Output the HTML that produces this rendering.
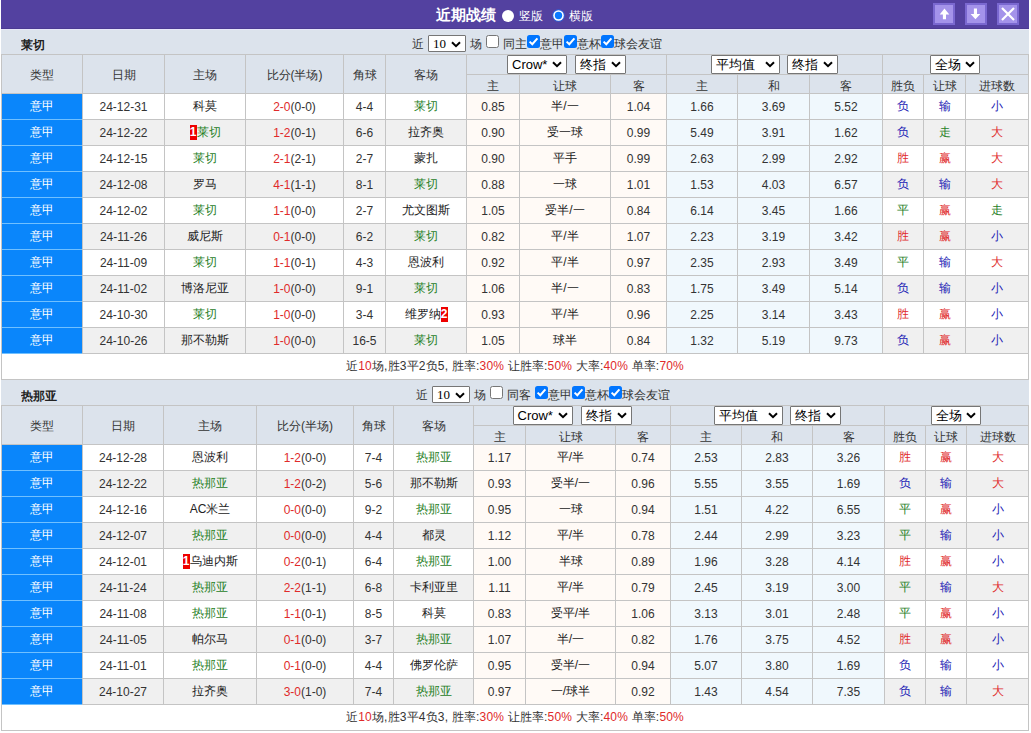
<!DOCTYPE html><html><head><meta charset="utf-8"><style>
*{margin:0;padding:0;box-sizing:border-box}
html,body{width:1031px;height:733px;overflow:hidden;background:#fff}
body{position:relative;font-family:"Liberation Sans",sans-serif;font-size:12px;color:#222}
body>div{position:absolute;white-space:nowrap;overflow:hidden}
svg{display:inline-block}
.r{color:#e02a2a}
.bd{background:#e00;color:#fff;font-weight:bold;display:inline-block;width:7px;line-height:15px;text-align:center;vertical-align:0}
.cap{font-weight:bold;font-size:12px;line-height:33px;color:#222}
.hc{text-align:center;line-height:40px;color:#333}
.hs{text-align:center;line-height:22px;color:#333}
.dc{text-align:center;line-height:25px;color:#222}
.dn{line-height:27px;color:#333}
.ft{text-align:center;line-height:25px;color:#333;letter-spacing:0.17px}
.grp{display:flex;justify-content:center;align-items:center;gap:8px}
.ttl{left:436px;top:0;height:29px;line-height:29px;color:#fff;font-size:12px;overflow:visible!important;display:flex;align-items:center}
.ttl b{font-size:15px;margin-right:6px}
.rd{margin-right:5px;position:relative;top:1px}
.rt{margin-right:9px;position:relative;top:2px}
.btn{background:#a493ea;border:2px solid #7a68d0}
.btn svg{position:absolute;left:-2px;top:-2px}
.flt{left:412px;height:25px;overflow:visible!important;font-size:12px;color:#333;display:flex;align-items:center}
.sel{display:inline-flex;align-items:center;position:relative;height:19px;border:1px solid #767676;border-radius:1px;background:#fff;padding-left:4px;color:#000;font-size:13px}
.sel .chev{position:absolute;right:4px;top:5px}
.cbw{display:inline-block;width:13px;height:13px;position:relative;top:-1px}
.flt .t{position:relative;top:2px}
</style></head><body>
<div style="left:1px;top:0px;width:1028px;height:29px;background:#5341a0"></div>
<div style="left:1px;top:28px;width:1028px;height:1px;background:#4b3a92"></div>
<div class="ttl"><b>近期战绩</b><svg width="12" height="12" viewBox="0 0 12 12" class="rd"><circle cx="6" cy="6" r="6" fill="#fff"/></svg><span class="rt">竖版</span><svg width="13" height="13" viewBox="0 0 13 13" class="rd" style="margin-left:-0.5px;margin-right:4.5px;top:0.5px"><circle cx="6.5" cy="6.5" r="6.3" fill="#2f5fd8"/><circle cx="6.5" cy="6.5" r="5.3" fill="#fff"/><circle cx="6.5" cy="6.5" r="3.7" fill="#0a7bff"/></svg><span class="rt">横版</span></div>
<div class="btn" style="left:933px;top:3px;width:22px;height:22px;"><svg width="22" height="22" viewBox="0 0 22 22"><path d="M11.45 5.6 L16.3 11.4 L13 11.4 L13 16.2 L9.9 16.2 L9.9 11.4 L6.7 11.4 Z" fill="#fff"/></svg></div>
<div class="btn" style="left:965px;top:3px;width:22px;height:22px;"><svg width="22" height="22" viewBox="0 0 22 22"><path d="M10.45 16.3 L15.3 11 L12 11 L12 5.6 L8.9 5.6 L8.9 11 L5.6 11 Z" fill="#fff"/></svg></div>
<div class="btn" style="left:997px;top:3px;width:22px;height:22px;"><svg width="22" height="22" viewBox="0 0 22 22"><path d="M5 5 L17 17 M17 5 L5 17" stroke="#fff" stroke-width="2.2" fill="none"/></svg></div>
<div style="left:1px;top:29px;width:1028px;height:25px;background:#dce3ec"></div>
<div class="cap" style="left:21px;top:29px;width:100px;height:25px;">莱切</div>
<div class="flt" style="top:30px;left:412px"><span class="t">近</span><span class="sel" style="width:38px;margin:2px 4px 0 4px;height:17px"><span class="sv" style="font-family:'Liberation Serif',serif;font-size:13px;">10</span><svg class="chev" width="10" height="7" viewBox="0 0 10 7"><polyline points="1,1.2 5,5.2 9,1.2" fill="none" stroke="#000" stroke-width="2"/></svg></span><span class="t">场</span><span class="cbw" style="margin:0 4px 0 4px"><svg width="13" height="13" viewBox="0 0 13 13" style="display:block"><rect x="0.5" y="0.5" width="12" height="12" rx="2" fill="#fff" stroke="#767676" stroke-width="1"/></svg></span><span class="t" style="margin-right:0px">同主</span><span class="cbw"><svg width="13" height="13" viewBox="0 0 13 13" style="display:block"><rect x="0" y="0" width="13" height="13" rx="2.5" fill="#0075ff"/><polyline points="2.6,6.6 5.3,9.2 10.4,3.4" fill="none" stroke="#fff" stroke-width="2"/></svg></span><span class="t">意甲</span><span class="cbw"><svg width="13" height="13" viewBox="0 0 13 13" style="display:block"><rect x="0" y="0" width="13" height="13" rx="2.5" fill="#0075ff"/><polyline points="2.6,6.6 5.3,9.2 10.4,3.4" fill="none" stroke="#fff" stroke-width="2"/></svg></span><span class="t">意杯</span><span class="cbw"><svg width="13" height="13" viewBox="0 0 13 13" style="display:block"><rect x="0" y="0" width="13" height="13" rx="2.5" fill="#0075ff"/><polyline points="2.6,6.6 5.3,9.2 10.4,3.4" fill="none" stroke="#fff" stroke-width="2"/></svg></span><span class="t">球会友谊</span></div>
<div style="left:1px;top:54px;width:1028px;height:39px;background:#dce3ec"></div>
<div style="left:1px;top:54px;width:1028px;height:1px;background:#c4c4c4"></div>
<div style="left:466px;top:74px;width:563px;height:1px;background:#c4c4c4"></div>
<div style="left:1px;top:93px;width:1028px;height:1px;background:#c4c4c4"></div>
<div style="left:1px;top:54px;width:1px;height:40px;background:#c4c4c4"></div>
<div style="left:82px;top:54px;width:1px;height:40px;background:#c4c4c4"></div>
<div style="left:164px;top:54px;width:1px;height:40px;background:#c4c4c4"></div>
<div style="left:245px;top:54px;width:1px;height:40px;background:#c4c4c4"></div>
<div style="left:343px;top:54px;width:1px;height:40px;background:#c4c4c4"></div>
<div style="left:385px;top:54px;width:1px;height:40px;background:#c4c4c4"></div>
<div style="left:466px;top:54px;width:1px;height:40px;background:#c4c4c4"></div>
<div style="left:519px;top:74px;width:1px;height:20px;background:#c4c4c4"></div>
<div style="left:610px;top:74px;width:1px;height:20px;background:#c4c4c4"></div>
<div style="left:666px;top:54px;width:1px;height:40px;background:#c4c4c4"></div>
<div style="left:737px;top:74px;width:1px;height:20px;background:#c4c4c4"></div>
<div style="left:809px;top:74px;width:1px;height:20px;background:#c4c4c4"></div>
<div style="left:882px;top:54px;width:1px;height:40px;background:#c4c4c4"></div>
<div style="left:923px;top:74px;width:1px;height:20px;background:#c4c4c4"></div>
<div style="left:965px;top:74px;width:1px;height:20px;background:#c4c4c4"></div>
<div style="left:1028px;top:54px;width:1px;height:40px;background:#c4c4c4"></div>
<div class="hc" style="left:2px;top:55px;width:80px;height:38px;">类型</div>
<div class="hc" style="left:83px;top:55px;width:81px;height:38px;">日期</div>
<div class="hc" style="left:165px;top:55px;width:80px;height:38px;">主场</div>
<div class="hc" style="left:246px;top:55px;width:97px;height:38px;">比分(半场)</div>
<div class="hc" style="left:344px;top:55px;width:41px;height:38px;">角球</div>
<div class="hc" style="left:386px;top:55px;width:80px;height:38px;">客场</div>
<div class="hs" style="left:467px;top:75px;width:52px;height:18px;">主</div>
<div class="hs" style="left:520px;top:75px;width:90px;height:18px;">让球</div>
<div class="hs" style="left:611px;top:75px;width:55px;height:18px;">客</div>
<div class="hs" style="left:667px;top:75px;width:70px;height:18px;">主</div>
<div class="hs" style="left:738px;top:75px;width:71px;height:18px;">和</div>
<div class="hs" style="left:810px;top:75px;width:72px;height:18px;">客</div>
<div class="hs" style="left:883px;top:75px;width:40px;height:18px;">胜负</div>
<div class="hs" style="left:924px;top:75px;width:41px;height:18px;">让球</div>
<div class="hs" style="left:966px;top:75px;width:62px;height:18px;">进球数</div>
<div class="grp" style="left:467px;top:55px;width:199px;height:19px;"><span class="sel" style="width:60px;"><span class="sv" style="font-family:'Liberation Sans',sans-serif;">Crow*</span><svg class="chev" width="10" height="7" viewBox="0 0 10 7"><polyline points="1,1.2 5,5.2 9,1.2" fill="none" stroke="#000" stroke-width="2"/></svg></span><span class="sel" style="width:51px;"><span class="sv" style="">终指</span><svg class="chev" width="10" height="7" viewBox="0 0 10 7"><polyline points="1,1.2 5,5.2 9,1.2" fill="none" stroke="#000" stroke-width="2"/></svg></span></div>
<div class="grp" style="left:667px;top:55px;width:215px;height:19px;gap:7px"><span class="sel" style="width:69px;"><span class="sv" style="">平均值</span><svg class="chev" width="10" height="7" viewBox="0 0 10 7"><polyline points="1,1.2 5,5.2 9,1.2" fill="none" stroke="#000" stroke-width="2"/></svg></span><span class="sel" style="width:51px;"><span class="sv" style="">终指</span><svg class="chev" width="10" height="7" viewBox="0 0 10 7"><polyline points="1,1.2 5,5.2 9,1.2" fill="none" stroke="#000" stroke-width="2"/></svg></span></div>
<div class="grp" style="left:883px;top:55px;width:145px;height:19px;"><span class="sel" style="width:50px;margin-right:1px"><span class="sv" style="">全场</span><svg class="chev" width="10" height="7" viewBox="0 0 10 7"><polyline points="1,1.2 5,5.2 9,1.2" fill="none" stroke="#000" stroke-width="2"/></svg></span></div>
<div class="dc" style="left:2px;top:94px;width:80px;height:25px;background:#0a86fb"><span style="color:#fff">意甲</span></div>
<div class="dc dn" style="left:83px;top:94px;width:81px;height:25px;background:#fff">24-12-31</div>
<div class="dc" style="left:165px;top:94px;width:80px;height:25px;background:#fff"><span style="color:#222">科莫</span></div>
<div class="dc dn" style="left:246px;top:94px;width:97px;height:25px;background:#fff"><span style="color:#e02a2a">2-0</span>(0-0)</div>
<div class="dc dn" style="left:344px;top:94px;width:41px;height:25px;background:#fff">4-4</div>
<div class="dc" style="left:386px;top:94px;width:80px;height:25px;background:#fff"><span style="color:#1f801f">莱切</span></div>
<div class="dc dn" style="left:467px;top:94px;width:52px;height:25px;background:#fffaf6">0.85</div>
<div class="dc" style="left:520px;top:94px;width:90px;height:25px;background:#fffaf6">半/一</div>
<div class="dc dn" style="left:611px;top:94px;width:55px;height:25px;background:#fffaf6">1.04</div>
<div class="dc dn" style="left:667px;top:94px;width:70px;height:25px;background:#f0f8fd">1.66</div>
<div class="dc dn" style="left:738px;top:94px;width:71px;height:25px;background:#f0f8fd">3.69</div>
<div class="dc dn" style="left:810px;top:94px;width:72px;height:25px;background:#f0f8fd">5.52</div>
<div class="dc" style="left:883px;top:94px;width:40px;height:25px;background:#fff"><span style="color:#1a1ab4">负</span></div>
<div class="dc" style="left:924px;top:94px;width:41px;height:25px;background:#fff"><span style="color:#1a1ab4">输</span></div>
<div class="dc" style="left:966px;top:94px;width:62px;height:25px;background:#fff"><span style="color:#1a1ab4">小</span></div>
<div style="left:82px;top:119px;width:947px;height:1px;background:#c4c4c4"></div>
<div style="left:1px;top:119px;width:81px;height:1px;background:#70c0ff"></div>
<div style="left:1px;top:93px;width:1px;height:27px;background:#c4c4c4"></div>
<div style="left:82px;top:93px;width:1px;height:27px;background:#c4c4c4"></div>
<div style="left:164px;top:93px;width:1px;height:27px;background:#c4c4c4"></div>
<div style="left:245px;top:93px;width:1px;height:27px;background:#c4c4c4"></div>
<div style="left:343px;top:93px;width:1px;height:27px;background:#c4c4c4"></div>
<div style="left:385px;top:93px;width:1px;height:27px;background:#c4c4c4"></div>
<div style="left:466px;top:93px;width:1px;height:27px;background:#c4c4c4"></div>
<div style="left:519px;top:93px;width:1px;height:27px;background:#c4c4c4"></div>
<div style="left:610px;top:93px;width:1px;height:27px;background:#c4c4c4"></div>
<div style="left:666px;top:93px;width:1px;height:27px;background:#c4c4c4"></div>
<div style="left:737px;top:93px;width:1px;height:27px;background:#c4c4c4"></div>
<div style="left:809px;top:93px;width:1px;height:27px;background:#c4c4c4"></div>
<div style="left:882px;top:93px;width:1px;height:27px;background:#c4c4c4"></div>
<div style="left:923px;top:93px;width:1px;height:27px;background:#c4c4c4"></div>
<div style="left:965px;top:93px;width:1px;height:27px;background:#c4c4c4"></div>
<div style="left:1028px;top:93px;width:1px;height:27px;background:#c4c4c4"></div>
<div class="dc" style="left:2px;top:120px;width:80px;height:25px;background:#0a86fb"><span style="color:#fff">意甲</span></div>
<div class="dc dn" style="left:83px;top:120px;width:81px;height:25px;background:#f0f0f0">24-12-22</div>
<div class="dc" style="left:165px;top:120px;width:80px;height:25px;background:#f0f0f0"><span class="bd">1</span><span style="color:#1f801f">莱切</span></div>
<div class="dc dn" style="left:246px;top:120px;width:97px;height:25px;background:#f0f0f0"><span style="color:#e02a2a">1-2</span>(0-1)</div>
<div class="dc dn" style="left:344px;top:120px;width:41px;height:25px;background:#f0f0f0">6-6</div>
<div class="dc" style="left:386px;top:120px;width:80px;height:25px;background:#f0f0f0"><span style="color:#222">拉齐奥</span></div>
<div class="dc dn" style="left:467px;top:120px;width:52px;height:25px;background:#fffaf6">0.90</div>
<div class="dc" style="left:520px;top:120px;width:90px;height:25px;background:#fffaf6">受一球</div>
<div class="dc dn" style="left:611px;top:120px;width:55px;height:25px;background:#fffaf6">0.99</div>
<div class="dc dn" style="left:667px;top:120px;width:70px;height:25px;background:#f0f8fd">5.49</div>
<div class="dc dn" style="left:738px;top:120px;width:71px;height:25px;background:#f0f8fd">3.91</div>
<div class="dc dn" style="left:810px;top:120px;width:72px;height:25px;background:#f0f8fd">1.62</div>
<div class="dc" style="left:883px;top:120px;width:40px;height:25px;background:#f0f0f0"><span style="color:#1a1ab4">负</span></div>
<div class="dc" style="left:924px;top:120px;width:41px;height:25px;background:#f0f0f0"><span style="color:#1f801f">走</span></div>
<div class="dc" style="left:966px;top:120px;width:62px;height:25px;background:#f0f0f0"><span style="color:#e02a2a">大</span></div>
<div style="left:82px;top:145px;width:947px;height:1px;background:#c4c4c4"></div>
<div style="left:1px;top:145px;width:81px;height:1px;background:#70c0ff"></div>
<div style="left:1px;top:119px;width:1px;height:27px;background:#c4c4c4"></div>
<div style="left:82px;top:119px;width:1px;height:27px;background:#c4c4c4"></div>
<div style="left:164px;top:119px;width:1px;height:27px;background:#c4c4c4"></div>
<div style="left:245px;top:119px;width:1px;height:27px;background:#c4c4c4"></div>
<div style="left:343px;top:119px;width:1px;height:27px;background:#c4c4c4"></div>
<div style="left:385px;top:119px;width:1px;height:27px;background:#c4c4c4"></div>
<div style="left:466px;top:119px;width:1px;height:27px;background:#c4c4c4"></div>
<div style="left:519px;top:119px;width:1px;height:27px;background:#c4c4c4"></div>
<div style="left:610px;top:119px;width:1px;height:27px;background:#c4c4c4"></div>
<div style="left:666px;top:119px;width:1px;height:27px;background:#c4c4c4"></div>
<div style="left:737px;top:119px;width:1px;height:27px;background:#c4c4c4"></div>
<div style="left:809px;top:119px;width:1px;height:27px;background:#c4c4c4"></div>
<div style="left:882px;top:119px;width:1px;height:27px;background:#c4c4c4"></div>
<div style="left:923px;top:119px;width:1px;height:27px;background:#c4c4c4"></div>
<div style="left:965px;top:119px;width:1px;height:27px;background:#c4c4c4"></div>
<div style="left:1028px;top:119px;width:1px;height:27px;background:#c4c4c4"></div>
<div class="dc" style="left:2px;top:146px;width:80px;height:25px;background:#0a86fb"><span style="color:#fff">意甲</span></div>
<div class="dc dn" style="left:83px;top:146px;width:81px;height:25px;background:#fff">24-12-15</div>
<div class="dc" style="left:165px;top:146px;width:80px;height:25px;background:#fff"><span style="color:#1f801f">莱切</span></div>
<div class="dc dn" style="left:246px;top:146px;width:97px;height:25px;background:#fff"><span style="color:#e02a2a">2-1</span>(2-1)</div>
<div class="dc dn" style="left:344px;top:146px;width:41px;height:25px;background:#fff">2-7</div>
<div class="dc" style="left:386px;top:146px;width:80px;height:25px;background:#fff"><span style="color:#222">蒙扎</span></div>
<div class="dc dn" style="left:467px;top:146px;width:52px;height:25px;background:#fffaf6">0.90</div>
<div class="dc" style="left:520px;top:146px;width:90px;height:25px;background:#fffaf6">平手</div>
<div class="dc dn" style="left:611px;top:146px;width:55px;height:25px;background:#fffaf6">0.99</div>
<div class="dc dn" style="left:667px;top:146px;width:70px;height:25px;background:#f0f8fd">2.63</div>
<div class="dc dn" style="left:738px;top:146px;width:71px;height:25px;background:#f0f8fd">2.99</div>
<div class="dc dn" style="left:810px;top:146px;width:72px;height:25px;background:#f0f8fd">2.92</div>
<div class="dc" style="left:883px;top:146px;width:40px;height:25px;background:#fff"><span style="color:#e02a2a">胜</span></div>
<div class="dc" style="left:924px;top:146px;width:41px;height:25px;background:#fff"><span style="color:#e02a2a">赢</span></div>
<div class="dc" style="left:966px;top:146px;width:62px;height:25px;background:#fff"><span style="color:#e02a2a">大</span></div>
<div style="left:82px;top:171px;width:947px;height:1px;background:#c4c4c4"></div>
<div style="left:1px;top:171px;width:81px;height:1px;background:#70c0ff"></div>
<div style="left:1px;top:145px;width:1px;height:27px;background:#c4c4c4"></div>
<div style="left:82px;top:145px;width:1px;height:27px;background:#c4c4c4"></div>
<div style="left:164px;top:145px;width:1px;height:27px;background:#c4c4c4"></div>
<div style="left:245px;top:145px;width:1px;height:27px;background:#c4c4c4"></div>
<div style="left:343px;top:145px;width:1px;height:27px;background:#c4c4c4"></div>
<div style="left:385px;top:145px;width:1px;height:27px;background:#c4c4c4"></div>
<div style="left:466px;top:145px;width:1px;height:27px;background:#c4c4c4"></div>
<div style="left:519px;top:145px;width:1px;height:27px;background:#c4c4c4"></div>
<div style="left:610px;top:145px;width:1px;height:27px;background:#c4c4c4"></div>
<div style="left:666px;top:145px;width:1px;height:27px;background:#c4c4c4"></div>
<div style="left:737px;top:145px;width:1px;height:27px;background:#c4c4c4"></div>
<div style="left:809px;top:145px;width:1px;height:27px;background:#c4c4c4"></div>
<div style="left:882px;top:145px;width:1px;height:27px;background:#c4c4c4"></div>
<div style="left:923px;top:145px;width:1px;height:27px;background:#c4c4c4"></div>
<div style="left:965px;top:145px;width:1px;height:27px;background:#c4c4c4"></div>
<div style="left:1028px;top:145px;width:1px;height:27px;background:#c4c4c4"></div>
<div class="dc" style="left:2px;top:172px;width:80px;height:25px;background:#0a86fb"><span style="color:#fff">意甲</span></div>
<div class="dc dn" style="left:83px;top:172px;width:81px;height:25px;background:#f0f0f0">24-12-08</div>
<div class="dc" style="left:165px;top:172px;width:80px;height:25px;background:#f0f0f0"><span style="color:#222">罗马</span></div>
<div class="dc dn" style="left:246px;top:172px;width:97px;height:25px;background:#f0f0f0"><span style="color:#e02a2a">4-1</span>(1-1)</div>
<div class="dc dn" style="left:344px;top:172px;width:41px;height:25px;background:#f0f0f0">8-1</div>
<div class="dc" style="left:386px;top:172px;width:80px;height:25px;background:#f0f0f0"><span style="color:#1f801f">莱切</span></div>
<div class="dc dn" style="left:467px;top:172px;width:52px;height:25px;background:#fffaf6">0.88</div>
<div class="dc" style="left:520px;top:172px;width:90px;height:25px;background:#fffaf6">一球</div>
<div class="dc dn" style="left:611px;top:172px;width:55px;height:25px;background:#fffaf6">1.01</div>
<div class="dc dn" style="left:667px;top:172px;width:70px;height:25px;background:#f0f8fd">1.53</div>
<div class="dc dn" style="left:738px;top:172px;width:71px;height:25px;background:#f0f8fd">4.03</div>
<div class="dc dn" style="left:810px;top:172px;width:72px;height:25px;background:#f0f8fd">6.57</div>
<div class="dc" style="left:883px;top:172px;width:40px;height:25px;background:#f0f0f0"><span style="color:#1a1ab4">负</span></div>
<div class="dc" style="left:924px;top:172px;width:41px;height:25px;background:#f0f0f0"><span style="color:#1a1ab4">输</span></div>
<div class="dc" style="left:966px;top:172px;width:62px;height:25px;background:#f0f0f0"><span style="color:#e02a2a">大</span></div>
<div style="left:82px;top:197px;width:947px;height:1px;background:#c4c4c4"></div>
<div style="left:1px;top:197px;width:81px;height:1px;background:#70c0ff"></div>
<div style="left:1px;top:171px;width:1px;height:27px;background:#c4c4c4"></div>
<div style="left:82px;top:171px;width:1px;height:27px;background:#c4c4c4"></div>
<div style="left:164px;top:171px;width:1px;height:27px;background:#c4c4c4"></div>
<div style="left:245px;top:171px;width:1px;height:27px;background:#c4c4c4"></div>
<div style="left:343px;top:171px;width:1px;height:27px;background:#c4c4c4"></div>
<div style="left:385px;top:171px;width:1px;height:27px;background:#c4c4c4"></div>
<div style="left:466px;top:171px;width:1px;height:27px;background:#c4c4c4"></div>
<div style="left:519px;top:171px;width:1px;height:27px;background:#c4c4c4"></div>
<div style="left:610px;top:171px;width:1px;height:27px;background:#c4c4c4"></div>
<div style="left:666px;top:171px;width:1px;height:27px;background:#c4c4c4"></div>
<div style="left:737px;top:171px;width:1px;height:27px;background:#c4c4c4"></div>
<div style="left:809px;top:171px;width:1px;height:27px;background:#c4c4c4"></div>
<div style="left:882px;top:171px;width:1px;height:27px;background:#c4c4c4"></div>
<div style="left:923px;top:171px;width:1px;height:27px;background:#c4c4c4"></div>
<div style="left:965px;top:171px;width:1px;height:27px;background:#c4c4c4"></div>
<div style="left:1028px;top:171px;width:1px;height:27px;background:#c4c4c4"></div>
<div class="dc" style="left:2px;top:198px;width:80px;height:25px;background:#0a86fb"><span style="color:#fff">意甲</span></div>
<div class="dc dn" style="left:83px;top:198px;width:81px;height:25px;background:#fff">24-12-02</div>
<div class="dc" style="left:165px;top:198px;width:80px;height:25px;background:#fff"><span style="color:#1f801f">莱切</span></div>
<div class="dc dn" style="left:246px;top:198px;width:97px;height:25px;background:#fff"><span style="color:#e02a2a">1-1</span>(0-0)</div>
<div class="dc dn" style="left:344px;top:198px;width:41px;height:25px;background:#fff">2-7</div>
<div class="dc" style="left:386px;top:198px;width:80px;height:25px;background:#fff"><span style="color:#222">尤文图斯</span></div>
<div class="dc dn" style="left:467px;top:198px;width:52px;height:25px;background:#fffaf6">1.05</div>
<div class="dc" style="left:520px;top:198px;width:90px;height:25px;background:#fffaf6">受半/一</div>
<div class="dc dn" style="left:611px;top:198px;width:55px;height:25px;background:#fffaf6">0.84</div>
<div class="dc dn" style="left:667px;top:198px;width:70px;height:25px;background:#f0f8fd">6.14</div>
<div class="dc dn" style="left:738px;top:198px;width:71px;height:25px;background:#f0f8fd">3.45</div>
<div class="dc dn" style="left:810px;top:198px;width:72px;height:25px;background:#f0f8fd">1.66</div>
<div class="dc" style="left:883px;top:198px;width:40px;height:25px;background:#fff"><span style="color:#1f801f">平</span></div>
<div class="dc" style="left:924px;top:198px;width:41px;height:25px;background:#fff"><span style="color:#e02a2a">赢</span></div>
<div class="dc" style="left:966px;top:198px;width:62px;height:25px;background:#fff"><span style="color:#1f801f">走</span></div>
<div style="left:82px;top:223px;width:947px;height:1px;background:#c4c4c4"></div>
<div style="left:1px;top:223px;width:81px;height:1px;background:#70c0ff"></div>
<div style="left:1px;top:197px;width:1px;height:27px;background:#c4c4c4"></div>
<div style="left:82px;top:197px;width:1px;height:27px;background:#c4c4c4"></div>
<div style="left:164px;top:197px;width:1px;height:27px;background:#c4c4c4"></div>
<div style="left:245px;top:197px;width:1px;height:27px;background:#c4c4c4"></div>
<div style="left:343px;top:197px;width:1px;height:27px;background:#c4c4c4"></div>
<div style="left:385px;top:197px;width:1px;height:27px;background:#c4c4c4"></div>
<div style="left:466px;top:197px;width:1px;height:27px;background:#c4c4c4"></div>
<div style="left:519px;top:197px;width:1px;height:27px;background:#c4c4c4"></div>
<div style="left:610px;top:197px;width:1px;height:27px;background:#c4c4c4"></div>
<div style="left:666px;top:197px;width:1px;height:27px;background:#c4c4c4"></div>
<div style="left:737px;top:197px;width:1px;height:27px;background:#c4c4c4"></div>
<div style="left:809px;top:197px;width:1px;height:27px;background:#c4c4c4"></div>
<div style="left:882px;top:197px;width:1px;height:27px;background:#c4c4c4"></div>
<div style="left:923px;top:197px;width:1px;height:27px;background:#c4c4c4"></div>
<div style="left:965px;top:197px;width:1px;height:27px;background:#c4c4c4"></div>
<div style="left:1028px;top:197px;width:1px;height:27px;background:#c4c4c4"></div>
<div class="dc" style="left:2px;top:224px;width:80px;height:25px;background:#0a86fb"><span style="color:#fff">意甲</span></div>
<div class="dc dn" style="left:83px;top:224px;width:81px;height:25px;background:#f0f0f0">24-11-26</div>
<div class="dc" style="left:165px;top:224px;width:80px;height:25px;background:#f0f0f0"><span style="color:#222">威尼斯</span></div>
<div class="dc dn" style="left:246px;top:224px;width:97px;height:25px;background:#f0f0f0"><span style="color:#e02a2a">0-1</span>(0-0)</div>
<div class="dc dn" style="left:344px;top:224px;width:41px;height:25px;background:#f0f0f0">6-2</div>
<div class="dc" style="left:386px;top:224px;width:80px;height:25px;background:#f0f0f0"><span style="color:#1f801f">莱切</span></div>
<div class="dc dn" style="left:467px;top:224px;width:52px;height:25px;background:#fffaf6">0.82</div>
<div class="dc" style="left:520px;top:224px;width:90px;height:25px;background:#fffaf6">平/半</div>
<div class="dc dn" style="left:611px;top:224px;width:55px;height:25px;background:#fffaf6">1.07</div>
<div class="dc dn" style="left:667px;top:224px;width:70px;height:25px;background:#f0f8fd">2.23</div>
<div class="dc dn" style="left:738px;top:224px;width:71px;height:25px;background:#f0f8fd">3.19</div>
<div class="dc dn" style="left:810px;top:224px;width:72px;height:25px;background:#f0f8fd">3.42</div>
<div class="dc" style="left:883px;top:224px;width:40px;height:25px;background:#f0f0f0"><span style="color:#e02a2a">胜</span></div>
<div class="dc" style="left:924px;top:224px;width:41px;height:25px;background:#f0f0f0"><span style="color:#e02a2a">赢</span></div>
<div class="dc" style="left:966px;top:224px;width:62px;height:25px;background:#f0f0f0"><span style="color:#1a1ab4">小</span></div>
<div style="left:82px;top:249px;width:947px;height:1px;background:#c4c4c4"></div>
<div style="left:1px;top:249px;width:81px;height:1px;background:#70c0ff"></div>
<div style="left:1px;top:223px;width:1px;height:27px;background:#c4c4c4"></div>
<div style="left:82px;top:223px;width:1px;height:27px;background:#c4c4c4"></div>
<div style="left:164px;top:223px;width:1px;height:27px;background:#c4c4c4"></div>
<div style="left:245px;top:223px;width:1px;height:27px;background:#c4c4c4"></div>
<div style="left:343px;top:223px;width:1px;height:27px;background:#c4c4c4"></div>
<div style="left:385px;top:223px;width:1px;height:27px;background:#c4c4c4"></div>
<div style="left:466px;top:223px;width:1px;height:27px;background:#c4c4c4"></div>
<div style="left:519px;top:223px;width:1px;height:27px;background:#c4c4c4"></div>
<div style="left:610px;top:223px;width:1px;height:27px;background:#c4c4c4"></div>
<div style="left:666px;top:223px;width:1px;height:27px;background:#c4c4c4"></div>
<div style="left:737px;top:223px;width:1px;height:27px;background:#c4c4c4"></div>
<div style="left:809px;top:223px;width:1px;height:27px;background:#c4c4c4"></div>
<div style="left:882px;top:223px;width:1px;height:27px;background:#c4c4c4"></div>
<div style="left:923px;top:223px;width:1px;height:27px;background:#c4c4c4"></div>
<div style="left:965px;top:223px;width:1px;height:27px;background:#c4c4c4"></div>
<div style="left:1028px;top:223px;width:1px;height:27px;background:#c4c4c4"></div>
<div class="dc" style="left:2px;top:250px;width:80px;height:25px;background:#0a86fb"><span style="color:#fff">意甲</span></div>
<div class="dc dn" style="left:83px;top:250px;width:81px;height:25px;background:#fff">24-11-09</div>
<div class="dc" style="left:165px;top:250px;width:80px;height:25px;background:#fff"><span style="color:#1f801f">莱切</span></div>
<div class="dc dn" style="left:246px;top:250px;width:97px;height:25px;background:#fff"><span style="color:#e02a2a">1-1</span>(0-1)</div>
<div class="dc dn" style="left:344px;top:250px;width:41px;height:25px;background:#fff">4-3</div>
<div class="dc" style="left:386px;top:250px;width:80px;height:25px;background:#fff"><span style="color:#222">恩波利</span></div>
<div class="dc dn" style="left:467px;top:250px;width:52px;height:25px;background:#fffaf6">0.92</div>
<div class="dc" style="left:520px;top:250px;width:90px;height:25px;background:#fffaf6">平/半</div>
<div class="dc dn" style="left:611px;top:250px;width:55px;height:25px;background:#fffaf6">0.97</div>
<div class="dc dn" style="left:667px;top:250px;width:70px;height:25px;background:#f0f8fd">2.35</div>
<div class="dc dn" style="left:738px;top:250px;width:71px;height:25px;background:#f0f8fd">2.93</div>
<div class="dc dn" style="left:810px;top:250px;width:72px;height:25px;background:#f0f8fd">3.49</div>
<div class="dc" style="left:883px;top:250px;width:40px;height:25px;background:#fff"><span style="color:#1f801f">平</span></div>
<div class="dc" style="left:924px;top:250px;width:41px;height:25px;background:#fff"><span style="color:#1a1ab4">输</span></div>
<div class="dc" style="left:966px;top:250px;width:62px;height:25px;background:#fff"><span style="color:#e02a2a">大</span></div>
<div style="left:82px;top:275px;width:947px;height:1px;background:#c4c4c4"></div>
<div style="left:1px;top:275px;width:81px;height:1px;background:#70c0ff"></div>
<div style="left:1px;top:249px;width:1px;height:27px;background:#c4c4c4"></div>
<div style="left:82px;top:249px;width:1px;height:27px;background:#c4c4c4"></div>
<div style="left:164px;top:249px;width:1px;height:27px;background:#c4c4c4"></div>
<div style="left:245px;top:249px;width:1px;height:27px;background:#c4c4c4"></div>
<div style="left:343px;top:249px;width:1px;height:27px;background:#c4c4c4"></div>
<div style="left:385px;top:249px;width:1px;height:27px;background:#c4c4c4"></div>
<div style="left:466px;top:249px;width:1px;height:27px;background:#c4c4c4"></div>
<div style="left:519px;top:249px;width:1px;height:27px;background:#c4c4c4"></div>
<div style="left:610px;top:249px;width:1px;height:27px;background:#c4c4c4"></div>
<div style="left:666px;top:249px;width:1px;height:27px;background:#c4c4c4"></div>
<div style="left:737px;top:249px;width:1px;height:27px;background:#c4c4c4"></div>
<div style="left:809px;top:249px;width:1px;height:27px;background:#c4c4c4"></div>
<div style="left:882px;top:249px;width:1px;height:27px;background:#c4c4c4"></div>
<div style="left:923px;top:249px;width:1px;height:27px;background:#c4c4c4"></div>
<div style="left:965px;top:249px;width:1px;height:27px;background:#c4c4c4"></div>
<div style="left:1028px;top:249px;width:1px;height:27px;background:#c4c4c4"></div>
<div class="dc" style="left:2px;top:276px;width:80px;height:25px;background:#0a86fb"><span style="color:#fff">意甲</span></div>
<div class="dc dn" style="left:83px;top:276px;width:81px;height:25px;background:#f0f0f0">24-11-02</div>
<div class="dc" style="left:165px;top:276px;width:80px;height:25px;background:#f0f0f0"><span style="color:#222">博洛尼亚</span></div>
<div class="dc dn" style="left:246px;top:276px;width:97px;height:25px;background:#f0f0f0"><span style="color:#e02a2a">1-0</span>(0-0)</div>
<div class="dc dn" style="left:344px;top:276px;width:41px;height:25px;background:#f0f0f0">9-1</div>
<div class="dc" style="left:386px;top:276px;width:80px;height:25px;background:#f0f0f0"><span style="color:#1f801f">莱切</span></div>
<div class="dc dn" style="left:467px;top:276px;width:52px;height:25px;background:#fffaf6">1.06</div>
<div class="dc" style="left:520px;top:276px;width:90px;height:25px;background:#fffaf6">半/一</div>
<div class="dc dn" style="left:611px;top:276px;width:55px;height:25px;background:#fffaf6">0.83</div>
<div class="dc dn" style="left:667px;top:276px;width:70px;height:25px;background:#f0f8fd">1.75</div>
<div class="dc dn" style="left:738px;top:276px;width:71px;height:25px;background:#f0f8fd">3.49</div>
<div class="dc dn" style="left:810px;top:276px;width:72px;height:25px;background:#f0f8fd">5.14</div>
<div class="dc" style="left:883px;top:276px;width:40px;height:25px;background:#f0f0f0"><span style="color:#1a1ab4">负</span></div>
<div class="dc" style="left:924px;top:276px;width:41px;height:25px;background:#f0f0f0"><span style="color:#1a1ab4">输</span></div>
<div class="dc" style="left:966px;top:276px;width:62px;height:25px;background:#f0f0f0"><span style="color:#1a1ab4">小</span></div>
<div style="left:82px;top:301px;width:947px;height:1px;background:#c4c4c4"></div>
<div style="left:1px;top:301px;width:81px;height:1px;background:#70c0ff"></div>
<div style="left:1px;top:275px;width:1px;height:27px;background:#c4c4c4"></div>
<div style="left:82px;top:275px;width:1px;height:27px;background:#c4c4c4"></div>
<div style="left:164px;top:275px;width:1px;height:27px;background:#c4c4c4"></div>
<div style="left:245px;top:275px;width:1px;height:27px;background:#c4c4c4"></div>
<div style="left:343px;top:275px;width:1px;height:27px;background:#c4c4c4"></div>
<div style="left:385px;top:275px;width:1px;height:27px;background:#c4c4c4"></div>
<div style="left:466px;top:275px;width:1px;height:27px;background:#c4c4c4"></div>
<div style="left:519px;top:275px;width:1px;height:27px;background:#c4c4c4"></div>
<div style="left:610px;top:275px;width:1px;height:27px;background:#c4c4c4"></div>
<div style="left:666px;top:275px;width:1px;height:27px;background:#c4c4c4"></div>
<div style="left:737px;top:275px;width:1px;height:27px;background:#c4c4c4"></div>
<div style="left:809px;top:275px;width:1px;height:27px;background:#c4c4c4"></div>
<div style="left:882px;top:275px;width:1px;height:27px;background:#c4c4c4"></div>
<div style="left:923px;top:275px;width:1px;height:27px;background:#c4c4c4"></div>
<div style="left:965px;top:275px;width:1px;height:27px;background:#c4c4c4"></div>
<div style="left:1028px;top:275px;width:1px;height:27px;background:#c4c4c4"></div>
<div class="dc" style="left:2px;top:302px;width:80px;height:25px;background:#0a86fb"><span style="color:#fff">意甲</span></div>
<div class="dc dn" style="left:83px;top:302px;width:81px;height:25px;background:#fff">24-10-30</div>
<div class="dc" style="left:165px;top:302px;width:80px;height:25px;background:#fff"><span style="color:#1f801f">莱切</span></div>
<div class="dc dn" style="left:246px;top:302px;width:97px;height:25px;background:#fff"><span style="color:#e02a2a">1-0</span>(0-0)</div>
<div class="dc dn" style="left:344px;top:302px;width:41px;height:25px;background:#fff">3-4</div>
<div class="dc" style="left:386px;top:302px;width:80px;height:25px;background:#fff"><span style="color:#222">维罗纳</span><span class="bd">2</span></div>
<div class="dc dn" style="left:467px;top:302px;width:52px;height:25px;background:#fffaf6">0.93</div>
<div class="dc" style="left:520px;top:302px;width:90px;height:25px;background:#fffaf6">平/半</div>
<div class="dc dn" style="left:611px;top:302px;width:55px;height:25px;background:#fffaf6">0.96</div>
<div class="dc dn" style="left:667px;top:302px;width:70px;height:25px;background:#f0f8fd">2.25</div>
<div class="dc dn" style="left:738px;top:302px;width:71px;height:25px;background:#f0f8fd">3.14</div>
<div class="dc dn" style="left:810px;top:302px;width:72px;height:25px;background:#f0f8fd">3.43</div>
<div class="dc" style="left:883px;top:302px;width:40px;height:25px;background:#fff"><span style="color:#e02a2a">胜</span></div>
<div class="dc" style="left:924px;top:302px;width:41px;height:25px;background:#fff"><span style="color:#e02a2a">赢</span></div>
<div class="dc" style="left:966px;top:302px;width:62px;height:25px;background:#fff"><span style="color:#1a1ab4">小</span></div>
<div style="left:82px;top:327px;width:947px;height:1px;background:#c4c4c4"></div>
<div style="left:1px;top:327px;width:81px;height:1px;background:#70c0ff"></div>
<div style="left:1px;top:301px;width:1px;height:27px;background:#c4c4c4"></div>
<div style="left:82px;top:301px;width:1px;height:27px;background:#c4c4c4"></div>
<div style="left:164px;top:301px;width:1px;height:27px;background:#c4c4c4"></div>
<div style="left:245px;top:301px;width:1px;height:27px;background:#c4c4c4"></div>
<div style="left:343px;top:301px;width:1px;height:27px;background:#c4c4c4"></div>
<div style="left:385px;top:301px;width:1px;height:27px;background:#c4c4c4"></div>
<div style="left:466px;top:301px;width:1px;height:27px;background:#c4c4c4"></div>
<div style="left:519px;top:301px;width:1px;height:27px;background:#c4c4c4"></div>
<div style="left:610px;top:301px;width:1px;height:27px;background:#c4c4c4"></div>
<div style="left:666px;top:301px;width:1px;height:27px;background:#c4c4c4"></div>
<div style="left:737px;top:301px;width:1px;height:27px;background:#c4c4c4"></div>
<div style="left:809px;top:301px;width:1px;height:27px;background:#c4c4c4"></div>
<div style="left:882px;top:301px;width:1px;height:27px;background:#c4c4c4"></div>
<div style="left:923px;top:301px;width:1px;height:27px;background:#c4c4c4"></div>
<div style="left:965px;top:301px;width:1px;height:27px;background:#c4c4c4"></div>
<div style="left:1028px;top:301px;width:1px;height:27px;background:#c4c4c4"></div>
<div class="dc" style="left:2px;top:328px;width:80px;height:25px;background:#0a86fb"><span style="color:#fff">意甲</span></div>
<div class="dc dn" style="left:83px;top:328px;width:81px;height:25px;background:#f0f0f0">24-10-26</div>
<div class="dc" style="left:165px;top:328px;width:80px;height:25px;background:#f0f0f0"><span style="color:#222">那不勒斯</span></div>
<div class="dc dn" style="left:246px;top:328px;width:97px;height:25px;background:#f0f0f0"><span style="color:#e02a2a">1-0</span>(0-0)</div>
<div class="dc dn" style="left:344px;top:328px;width:41px;height:25px;background:#f0f0f0">16-5</div>
<div class="dc" style="left:386px;top:328px;width:80px;height:25px;background:#f0f0f0"><span style="color:#1f801f">莱切</span></div>
<div class="dc dn" style="left:467px;top:328px;width:52px;height:25px;background:#fffaf6">1.05</div>
<div class="dc" style="left:520px;top:328px;width:90px;height:25px;background:#fffaf6">球半</div>
<div class="dc dn" style="left:611px;top:328px;width:55px;height:25px;background:#fffaf6">0.84</div>
<div class="dc dn" style="left:667px;top:328px;width:70px;height:25px;background:#f0f8fd">1.32</div>
<div class="dc dn" style="left:738px;top:328px;width:71px;height:25px;background:#f0f8fd">5.19</div>
<div class="dc dn" style="left:810px;top:328px;width:72px;height:25px;background:#f0f8fd">9.73</div>
<div class="dc" style="left:883px;top:328px;width:40px;height:25px;background:#f0f0f0"><span style="color:#1a1ab4">负</span></div>
<div class="dc" style="left:924px;top:328px;width:41px;height:25px;background:#f0f0f0"><span style="color:#e02a2a">赢</span></div>
<div class="dc" style="left:966px;top:328px;width:62px;height:25px;background:#f0f0f0"><span style="color:#1a1ab4">小</span></div>
<div style="left:82px;top:353px;width:947px;height:1px;background:#c4c4c4"></div>
<div style="left:1px;top:353px;width:81px;height:1px;background:#70c0ff"></div>
<div style="left:1px;top:327px;width:1px;height:27px;background:#c4c4c4"></div>
<div style="left:82px;top:327px;width:1px;height:27px;background:#c4c4c4"></div>
<div style="left:164px;top:327px;width:1px;height:27px;background:#c4c4c4"></div>
<div style="left:245px;top:327px;width:1px;height:27px;background:#c4c4c4"></div>
<div style="left:343px;top:327px;width:1px;height:27px;background:#c4c4c4"></div>
<div style="left:385px;top:327px;width:1px;height:27px;background:#c4c4c4"></div>
<div style="left:466px;top:327px;width:1px;height:27px;background:#c4c4c4"></div>
<div style="left:519px;top:327px;width:1px;height:27px;background:#c4c4c4"></div>
<div style="left:610px;top:327px;width:1px;height:27px;background:#c4c4c4"></div>
<div style="left:666px;top:327px;width:1px;height:27px;background:#c4c4c4"></div>
<div style="left:737px;top:327px;width:1px;height:27px;background:#c4c4c4"></div>
<div style="left:809px;top:327px;width:1px;height:27px;background:#c4c4c4"></div>
<div style="left:882px;top:327px;width:1px;height:27px;background:#c4c4c4"></div>
<div style="left:923px;top:327px;width:1px;height:27px;background:#c4c4c4"></div>
<div style="left:965px;top:327px;width:1px;height:27px;background:#c4c4c4"></div>
<div style="left:1028px;top:327px;width:1px;height:27px;background:#c4c4c4"></div>
<div class="ft" style="left:2px;top:354px;width:1026px;height:25px;background:#fff">近<span class="r">10</span>场,胜3平2负5, 胜率:<span class="r">30%</span> 让胜率:<span class="r">50%</span> 大率:<span class="r">40%</span> 单率:<span class="r">70%</span></div>
<div style="left:1px;top:353px;width:1px;height:27px;background:#c4c4c4"></div>
<div style="left:1028px;top:353px;width:1px;height:27px;background:#c4c4c4"></div>
<div style="left:1px;top:379px;width:1028px;height:1px;background:#c4c4c4"></div>
<div style="left:1px;top:29px;width:1028px;height:1px;background:#e6e6f8"></div>
<div style="left:1px;top:380px;width:1028px;height:25px;background:#dce3ec"></div>
<div class="cap" style="left:21px;top:380px;width:100px;height:25px;">热那亚</div>
<div class="flt" style="top:381px;left:416px"><span class="t">近</span><span class="sel" style="width:38px;margin:2px 4px 0 4px;height:17px"><span class="sv" style="font-family:'Liberation Serif',serif;font-size:13px;">10</span><svg class="chev" width="10" height="7" viewBox="0 0 10 7"><polyline points="1,1.2 5,5.2 9,1.2" fill="none" stroke="#000" stroke-width="2"/></svg></span><span class="t">场</span><span class="cbw" style="margin:0 4px 0 4px"><svg width="13" height="13" viewBox="0 0 13 13" style="display:block"><rect x="0.5" y="0.5" width="12" height="12" rx="2" fill="#fff" stroke="#767676" stroke-width="1"/></svg></span><span class="t" style="margin-right:4px">同客</span><span class="cbw"><svg width="13" height="13" viewBox="0 0 13 13" style="display:block"><rect x="0" y="0" width="13" height="13" rx="2.5" fill="#0075ff"/><polyline points="2.6,6.6 5.3,9.2 10.4,3.4" fill="none" stroke="#fff" stroke-width="2"/></svg></span><span class="t">意甲</span><span class="cbw"><svg width="13" height="13" viewBox="0 0 13 13" style="display:block"><rect x="0" y="0" width="13" height="13" rx="2.5" fill="#0075ff"/><polyline points="2.6,6.6 5.3,9.2 10.4,3.4" fill="none" stroke="#fff" stroke-width="2"/></svg></span><span class="t">意杯</span><span class="cbw"><svg width="13" height="13" viewBox="0 0 13 13" style="display:block"><rect x="0" y="0" width="13" height="13" rx="2.5" fill="#0075ff"/><polyline points="2.6,6.6 5.3,9.2 10.4,3.4" fill="none" stroke="#fff" stroke-width="2"/></svg></span><span class="t">球会友谊</span></div>
<div style="left:1px;top:405px;width:1028px;height:39px;background:#dce3ec"></div>
<div style="left:1px;top:405px;width:1028px;height:1px;background:#c4c4c4"></div>
<div style="left:473px;top:425px;width:556px;height:1px;background:#c4c4c4"></div>
<div style="left:1px;top:444px;width:1028px;height:1px;background:#c4c4c4"></div>
<div style="left:1px;top:405px;width:1px;height:40px;background:#c4c4c4"></div>
<div style="left:82px;top:405px;width:1px;height:40px;background:#c4c4c4"></div>
<div style="left:163px;top:405px;width:1px;height:40px;background:#c4c4c4"></div>
<div style="left:256px;top:405px;width:1px;height:40px;background:#c4c4c4"></div>
<div style="left:353px;top:405px;width:1px;height:40px;background:#c4c4c4"></div>
<div style="left:393px;top:405px;width:1px;height:40px;background:#c4c4c4"></div>
<div style="left:473px;top:405px;width:1px;height:40px;background:#c4c4c4"></div>
<div style="left:525px;top:425px;width:1px;height:20px;background:#c4c4c4"></div>
<div style="left:615px;top:425px;width:1px;height:20px;background:#c4c4c4"></div>
<div style="left:670px;top:405px;width:1px;height:40px;background:#c4c4c4"></div>
<div style="left:741px;top:425px;width:1px;height:20px;background:#c4c4c4"></div>
<div style="left:812px;top:425px;width:1px;height:20px;background:#c4c4c4"></div>
<div style="left:884px;top:405px;width:1px;height:40px;background:#c4c4c4"></div>
<div style="left:925px;top:425px;width:1px;height:20px;background:#c4c4c4"></div>
<div style="left:966px;top:425px;width:1px;height:20px;background:#c4c4c4"></div>
<div style="left:1028px;top:405px;width:1px;height:40px;background:#c4c4c4"></div>
<div class="hc" style="left:2px;top:406px;width:80px;height:38px;">类型</div>
<div class="hc" style="left:83px;top:406px;width:80px;height:38px;">日期</div>
<div class="hc" style="left:164px;top:406px;width:92px;height:38px;">主场</div>
<div class="hc" style="left:257px;top:406px;width:96px;height:38px;">比分(半场)</div>
<div class="hc" style="left:354px;top:406px;width:39px;height:38px;">角球</div>
<div class="hc" style="left:394px;top:406px;width:79px;height:38px;">客场</div>
<div class="hs" style="left:474px;top:426px;width:51px;height:18px;">主</div>
<div class="hs" style="left:526px;top:426px;width:89px;height:18px;">让球</div>
<div class="hs" style="left:616px;top:426px;width:54px;height:18px;">客</div>
<div class="hs" style="left:671px;top:426px;width:70px;height:18px;">主</div>
<div class="hs" style="left:742px;top:426px;width:70px;height:18px;">和</div>
<div class="hs" style="left:813px;top:426px;width:71px;height:18px;">客</div>
<div class="hs" style="left:885px;top:426px;width:40px;height:18px;">胜负</div>
<div class="hs" style="left:926px;top:426px;width:40px;height:18px;">让球</div>
<div class="hs" style="left:967px;top:426px;width:61px;height:18px;">进球数</div>
<div class="grp" style="left:474px;top:406px;width:196px;height:19px;"><span class="sel" style="width:60px;"><span class="sv" style="font-family:'Liberation Sans',sans-serif;">Crow*</span><svg class="chev" width="10" height="7" viewBox="0 0 10 7"><polyline points="1,1.2 5,5.2 9,1.2" fill="none" stroke="#000" stroke-width="2"/></svg></span><span class="sel" style="width:51px;"><span class="sv" style="">终指</span><svg class="chev" width="10" height="7" viewBox="0 0 10 7"><polyline points="1,1.2 5,5.2 9,1.2" fill="none" stroke="#000" stroke-width="2"/></svg></span></div>
<div class="grp" style="left:671px;top:406px;width:213px;height:19px;gap:7px"><span class="sel" style="width:69px;"><span class="sv" style="">平均值</span><svg class="chev" width="10" height="7" viewBox="0 0 10 7"><polyline points="1,1.2 5,5.2 9,1.2" fill="none" stroke="#000" stroke-width="2"/></svg></span><span class="sel" style="width:51px;"><span class="sv" style="">终指</span><svg class="chev" width="10" height="7" viewBox="0 0 10 7"><polyline points="1,1.2 5,5.2 9,1.2" fill="none" stroke="#000" stroke-width="2"/></svg></span></div>
<div class="grp" style="left:885px;top:406px;width:143px;height:19px;"><span class="sel" style="width:50px;margin-right:1px"><span class="sv" style="">全场</span><svg class="chev" width="10" height="7" viewBox="0 0 10 7"><polyline points="1,1.2 5,5.2 9,1.2" fill="none" stroke="#000" stroke-width="2"/></svg></span></div>
<div class="dc" style="left:2px;top:445px;width:80px;height:25px;background:#0a86fb"><span style="color:#fff">意甲</span></div>
<div class="dc dn" style="left:83px;top:445px;width:80px;height:25px;background:#fff">24-12-28</div>
<div class="dc" style="left:164px;top:445px;width:92px;height:25px;background:#fff"><span style="color:#222">恩波利</span></div>
<div class="dc dn" style="left:257px;top:445px;width:96px;height:25px;background:#fff"><span style="color:#e02a2a">1-2</span>(0-0)</div>
<div class="dc dn" style="left:354px;top:445px;width:39px;height:25px;background:#fff">7-4</div>
<div class="dc" style="left:394px;top:445px;width:79px;height:25px;background:#fff"><span style="color:#1f801f">热那亚</span></div>
<div class="dc dn" style="left:474px;top:445px;width:51px;height:25px;background:#fffaf6">1.17</div>
<div class="dc" style="left:526px;top:445px;width:89px;height:25px;background:#fffaf6">平/半</div>
<div class="dc dn" style="left:616px;top:445px;width:54px;height:25px;background:#fffaf6">0.74</div>
<div class="dc dn" style="left:671px;top:445px;width:70px;height:25px;background:#f0f8fd">2.53</div>
<div class="dc dn" style="left:742px;top:445px;width:70px;height:25px;background:#f0f8fd">2.83</div>
<div class="dc dn" style="left:813px;top:445px;width:71px;height:25px;background:#f0f8fd">3.26</div>
<div class="dc" style="left:885px;top:445px;width:40px;height:25px;background:#fff"><span style="color:#e02a2a">胜</span></div>
<div class="dc" style="left:926px;top:445px;width:40px;height:25px;background:#fff"><span style="color:#e02a2a">赢</span></div>
<div class="dc" style="left:967px;top:445px;width:61px;height:25px;background:#fff"><span style="color:#e02a2a">大</span></div>
<div style="left:82px;top:470px;width:947px;height:1px;background:#c4c4c4"></div>
<div style="left:1px;top:470px;width:81px;height:1px;background:#70c0ff"></div>
<div style="left:1px;top:444px;width:1px;height:27px;background:#c4c4c4"></div>
<div style="left:82px;top:444px;width:1px;height:27px;background:#c4c4c4"></div>
<div style="left:163px;top:444px;width:1px;height:27px;background:#c4c4c4"></div>
<div style="left:256px;top:444px;width:1px;height:27px;background:#c4c4c4"></div>
<div style="left:353px;top:444px;width:1px;height:27px;background:#c4c4c4"></div>
<div style="left:393px;top:444px;width:1px;height:27px;background:#c4c4c4"></div>
<div style="left:473px;top:444px;width:1px;height:27px;background:#c4c4c4"></div>
<div style="left:525px;top:444px;width:1px;height:27px;background:#c4c4c4"></div>
<div style="left:615px;top:444px;width:1px;height:27px;background:#c4c4c4"></div>
<div style="left:670px;top:444px;width:1px;height:27px;background:#c4c4c4"></div>
<div style="left:741px;top:444px;width:1px;height:27px;background:#c4c4c4"></div>
<div style="left:812px;top:444px;width:1px;height:27px;background:#c4c4c4"></div>
<div style="left:884px;top:444px;width:1px;height:27px;background:#c4c4c4"></div>
<div style="left:925px;top:444px;width:1px;height:27px;background:#c4c4c4"></div>
<div style="left:966px;top:444px;width:1px;height:27px;background:#c4c4c4"></div>
<div style="left:1028px;top:444px;width:1px;height:27px;background:#c4c4c4"></div>
<div class="dc" style="left:2px;top:471px;width:80px;height:25px;background:#0a86fb"><span style="color:#fff">意甲</span></div>
<div class="dc dn" style="left:83px;top:471px;width:80px;height:25px;background:#f0f0f0">24-12-22</div>
<div class="dc" style="left:164px;top:471px;width:92px;height:25px;background:#f0f0f0"><span style="color:#1f801f">热那亚</span></div>
<div class="dc dn" style="left:257px;top:471px;width:96px;height:25px;background:#f0f0f0"><span style="color:#e02a2a">1-2</span>(0-2)</div>
<div class="dc dn" style="left:354px;top:471px;width:39px;height:25px;background:#f0f0f0">5-6</div>
<div class="dc" style="left:394px;top:471px;width:79px;height:25px;background:#f0f0f0"><span style="color:#222">那不勒斯</span></div>
<div class="dc dn" style="left:474px;top:471px;width:51px;height:25px;background:#fffaf6">0.93</div>
<div class="dc" style="left:526px;top:471px;width:89px;height:25px;background:#fffaf6">受半/一</div>
<div class="dc dn" style="left:616px;top:471px;width:54px;height:25px;background:#fffaf6">0.96</div>
<div class="dc dn" style="left:671px;top:471px;width:70px;height:25px;background:#f0f8fd">5.55</div>
<div class="dc dn" style="left:742px;top:471px;width:70px;height:25px;background:#f0f8fd">3.55</div>
<div class="dc dn" style="left:813px;top:471px;width:71px;height:25px;background:#f0f8fd">1.69</div>
<div class="dc" style="left:885px;top:471px;width:40px;height:25px;background:#f0f0f0"><span style="color:#1a1ab4">负</span></div>
<div class="dc" style="left:926px;top:471px;width:40px;height:25px;background:#f0f0f0"><span style="color:#1a1ab4">输</span></div>
<div class="dc" style="left:967px;top:471px;width:61px;height:25px;background:#f0f0f0"><span style="color:#e02a2a">大</span></div>
<div style="left:82px;top:496px;width:947px;height:1px;background:#c4c4c4"></div>
<div style="left:1px;top:496px;width:81px;height:1px;background:#70c0ff"></div>
<div style="left:1px;top:470px;width:1px;height:27px;background:#c4c4c4"></div>
<div style="left:82px;top:470px;width:1px;height:27px;background:#c4c4c4"></div>
<div style="left:163px;top:470px;width:1px;height:27px;background:#c4c4c4"></div>
<div style="left:256px;top:470px;width:1px;height:27px;background:#c4c4c4"></div>
<div style="left:353px;top:470px;width:1px;height:27px;background:#c4c4c4"></div>
<div style="left:393px;top:470px;width:1px;height:27px;background:#c4c4c4"></div>
<div style="left:473px;top:470px;width:1px;height:27px;background:#c4c4c4"></div>
<div style="left:525px;top:470px;width:1px;height:27px;background:#c4c4c4"></div>
<div style="left:615px;top:470px;width:1px;height:27px;background:#c4c4c4"></div>
<div style="left:670px;top:470px;width:1px;height:27px;background:#c4c4c4"></div>
<div style="left:741px;top:470px;width:1px;height:27px;background:#c4c4c4"></div>
<div style="left:812px;top:470px;width:1px;height:27px;background:#c4c4c4"></div>
<div style="left:884px;top:470px;width:1px;height:27px;background:#c4c4c4"></div>
<div style="left:925px;top:470px;width:1px;height:27px;background:#c4c4c4"></div>
<div style="left:966px;top:470px;width:1px;height:27px;background:#c4c4c4"></div>
<div style="left:1028px;top:470px;width:1px;height:27px;background:#c4c4c4"></div>
<div class="dc" style="left:2px;top:497px;width:80px;height:25px;background:#0a86fb"><span style="color:#fff">意甲</span></div>
<div class="dc dn" style="left:83px;top:497px;width:80px;height:25px;background:#fff">24-12-16</div>
<div class="dc" style="left:164px;top:497px;width:92px;height:25px;background:#fff"><span style="color:#222">AC米兰</span></div>
<div class="dc dn" style="left:257px;top:497px;width:96px;height:25px;background:#fff"><span style="color:#e02a2a">0-0</span>(0-0)</div>
<div class="dc dn" style="left:354px;top:497px;width:39px;height:25px;background:#fff">9-2</div>
<div class="dc" style="left:394px;top:497px;width:79px;height:25px;background:#fff"><span style="color:#1f801f">热那亚</span></div>
<div class="dc dn" style="left:474px;top:497px;width:51px;height:25px;background:#fffaf6">0.95</div>
<div class="dc" style="left:526px;top:497px;width:89px;height:25px;background:#fffaf6">一球</div>
<div class="dc dn" style="left:616px;top:497px;width:54px;height:25px;background:#fffaf6">0.94</div>
<div class="dc dn" style="left:671px;top:497px;width:70px;height:25px;background:#f0f8fd">1.51</div>
<div class="dc dn" style="left:742px;top:497px;width:70px;height:25px;background:#f0f8fd">4.22</div>
<div class="dc dn" style="left:813px;top:497px;width:71px;height:25px;background:#f0f8fd">6.55</div>
<div class="dc" style="left:885px;top:497px;width:40px;height:25px;background:#fff"><span style="color:#1f801f">平</span></div>
<div class="dc" style="left:926px;top:497px;width:40px;height:25px;background:#fff"><span style="color:#e02a2a">赢</span></div>
<div class="dc" style="left:967px;top:497px;width:61px;height:25px;background:#fff"><span style="color:#1a1ab4">小</span></div>
<div style="left:82px;top:522px;width:947px;height:1px;background:#c4c4c4"></div>
<div style="left:1px;top:522px;width:81px;height:1px;background:#70c0ff"></div>
<div style="left:1px;top:496px;width:1px;height:27px;background:#c4c4c4"></div>
<div style="left:82px;top:496px;width:1px;height:27px;background:#c4c4c4"></div>
<div style="left:163px;top:496px;width:1px;height:27px;background:#c4c4c4"></div>
<div style="left:256px;top:496px;width:1px;height:27px;background:#c4c4c4"></div>
<div style="left:353px;top:496px;width:1px;height:27px;background:#c4c4c4"></div>
<div style="left:393px;top:496px;width:1px;height:27px;background:#c4c4c4"></div>
<div style="left:473px;top:496px;width:1px;height:27px;background:#c4c4c4"></div>
<div style="left:525px;top:496px;width:1px;height:27px;background:#c4c4c4"></div>
<div style="left:615px;top:496px;width:1px;height:27px;background:#c4c4c4"></div>
<div style="left:670px;top:496px;width:1px;height:27px;background:#c4c4c4"></div>
<div style="left:741px;top:496px;width:1px;height:27px;background:#c4c4c4"></div>
<div style="left:812px;top:496px;width:1px;height:27px;background:#c4c4c4"></div>
<div style="left:884px;top:496px;width:1px;height:27px;background:#c4c4c4"></div>
<div style="left:925px;top:496px;width:1px;height:27px;background:#c4c4c4"></div>
<div style="left:966px;top:496px;width:1px;height:27px;background:#c4c4c4"></div>
<div style="left:1028px;top:496px;width:1px;height:27px;background:#c4c4c4"></div>
<div class="dc" style="left:2px;top:523px;width:80px;height:25px;background:#0a86fb"><span style="color:#fff">意甲</span></div>
<div class="dc dn" style="left:83px;top:523px;width:80px;height:25px;background:#f0f0f0">24-12-07</div>
<div class="dc" style="left:164px;top:523px;width:92px;height:25px;background:#f0f0f0"><span style="color:#1f801f">热那亚</span></div>
<div class="dc dn" style="left:257px;top:523px;width:96px;height:25px;background:#f0f0f0"><span style="color:#e02a2a">0-0</span>(0-0)</div>
<div class="dc dn" style="left:354px;top:523px;width:39px;height:25px;background:#f0f0f0">4-4</div>
<div class="dc" style="left:394px;top:523px;width:79px;height:25px;background:#f0f0f0"><span style="color:#222">都灵</span></div>
<div class="dc dn" style="left:474px;top:523px;width:51px;height:25px;background:#fffaf6">1.12</div>
<div class="dc" style="left:526px;top:523px;width:89px;height:25px;background:#fffaf6">平/半</div>
<div class="dc dn" style="left:616px;top:523px;width:54px;height:25px;background:#fffaf6">0.78</div>
<div class="dc dn" style="left:671px;top:523px;width:70px;height:25px;background:#f0f8fd">2.44</div>
<div class="dc dn" style="left:742px;top:523px;width:70px;height:25px;background:#f0f8fd">2.99</div>
<div class="dc dn" style="left:813px;top:523px;width:71px;height:25px;background:#f0f8fd">3.23</div>
<div class="dc" style="left:885px;top:523px;width:40px;height:25px;background:#f0f0f0"><span style="color:#1f801f">平</span></div>
<div class="dc" style="left:926px;top:523px;width:40px;height:25px;background:#f0f0f0"><span style="color:#1a1ab4">输</span></div>
<div class="dc" style="left:967px;top:523px;width:61px;height:25px;background:#f0f0f0"><span style="color:#1a1ab4">小</span></div>
<div style="left:82px;top:548px;width:947px;height:1px;background:#c4c4c4"></div>
<div style="left:1px;top:548px;width:81px;height:1px;background:#70c0ff"></div>
<div style="left:1px;top:522px;width:1px;height:27px;background:#c4c4c4"></div>
<div style="left:82px;top:522px;width:1px;height:27px;background:#c4c4c4"></div>
<div style="left:163px;top:522px;width:1px;height:27px;background:#c4c4c4"></div>
<div style="left:256px;top:522px;width:1px;height:27px;background:#c4c4c4"></div>
<div style="left:353px;top:522px;width:1px;height:27px;background:#c4c4c4"></div>
<div style="left:393px;top:522px;width:1px;height:27px;background:#c4c4c4"></div>
<div style="left:473px;top:522px;width:1px;height:27px;background:#c4c4c4"></div>
<div style="left:525px;top:522px;width:1px;height:27px;background:#c4c4c4"></div>
<div style="left:615px;top:522px;width:1px;height:27px;background:#c4c4c4"></div>
<div style="left:670px;top:522px;width:1px;height:27px;background:#c4c4c4"></div>
<div style="left:741px;top:522px;width:1px;height:27px;background:#c4c4c4"></div>
<div style="left:812px;top:522px;width:1px;height:27px;background:#c4c4c4"></div>
<div style="left:884px;top:522px;width:1px;height:27px;background:#c4c4c4"></div>
<div style="left:925px;top:522px;width:1px;height:27px;background:#c4c4c4"></div>
<div style="left:966px;top:522px;width:1px;height:27px;background:#c4c4c4"></div>
<div style="left:1028px;top:522px;width:1px;height:27px;background:#c4c4c4"></div>
<div class="dc" style="left:2px;top:549px;width:80px;height:25px;background:#0a86fb"><span style="color:#fff">意甲</span></div>
<div class="dc dn" style="left:83px;top:549px;width:80px;height:25px;background:#fff">24-12-01</div>
<div class="dc" style="left:164px;top:549px;width:92px;height:25px;background:#fff"><span class="bd">1</span><span style="color:#222">乌迪内斯</span></div>
<div class="dc dn" style="left:257px;top:549px;width:96px;height:25px;background:#fff"><span style="color:#e02a2a">0-2</span>(0-1)</div>
<div class="dc dn" style="left:354px;top:549px;width:39px;height:25px;background:#fff">6-4</div>
<div class="dc" style="left:394px;top:549px;width:79px;height:25px;background:#fff"><span style="color:#1f801f">热那亚</span></div>
<div class="dc dn" style="left:474px;top:549px;width:51px;height:25px;background:#fffaf6">1.00</div>
<div class="dc" style="left:526px;top:549px;width:89px;height:25px;background:#fffaf6">半球</div>
<div class="dc dn" style="left:616px;top:549px;width:54px;height:25px;background:#fffaf6">0.89</div>
<div class="dc dn" style="left:671px;top:549px;width:70px;height:25px;background:#f0f8fd">1.96</div>
<div class="dc dn" style="left:742px;top:549px;width:70px;height:25px;background:#f0f8fd">3.28</div>
<div class="dc dn" style="left:813px;top:549px;width:71px;height:25px;background:#f0f8fd">4.14</div>
<div class="dc" style="left:885px;top:549px;width:40px;height:25px;background:#fff"><span style="color:#e02a2a">胜</span></div>
<div class="dc" style="left:926px;top:549px;width:40px;height:25px;background:#fff"><span style="color:#e02a2a">赢</span></div>
<div class="dc" style="left:967px;top:549px;width:61px;height:25px;background:#fff"><span style="color:#1a1ab4">小</span></div>
<div style="left:82px;top:574px;width:947px;height:1px;background:#c4c4c4"></div>
<div style="left:1px;top:574px;width:81px;height:1px;background:#70c0ff"></div>
<div style="left:1px;top:548px;width:1px;height:27px;background:#c4c4c4"></div>
<div style="left:82px;top:548px;width:1px;height:27px;background:#c4c4c4"></div>
<div style="left:163px;top:548px;width:1px;height:27px;background:#c4c4c4"></div>
<div style="left:256px;top:548px;width:1px;height:27px;background:#c4c4c4"></div>
<div style="left:353px;top:548px;width:1px;height:27px;background:#c4c4c4"></div>
<div style="left:393px;top:548px;width:1px;height:27px;background:#c4c4c4"></div>
<div style="left:473px;top:548px;width:1px;height:27px;background:#c4c4c4"></div>
<div style="left:525px;top:548px;width:1px;height:27px;background:#c4c4c4"></div>
<div style="left:615px;top:548px;width:1px;height:27px;background:#c4c4c4"></div>
<div style="left:670px;top:548px;width:1px;height:27px;background:#c4c4c4"></div>
<div style="left:741px;top:548px;width:1px;height:27px;background:#c4c4c4"></div>
<div style="left:812px;top:548px;width:1px;height:27px;background:#c4c4c4"></div>
<div style="left:884px;top:548px;width:1px;height:27px;background:#c4c4c4"></div>
<div style="left:925px;top:548px;width:1px;height:27px;background:#c4c4c4"></div>
<div style="left:966px;top:548px;width:1px;height:27px;background:#c4c4c4"></div>
<div style="left:1028px;top:548px;width:1px;height:27px;background:#c4c4c4"></div>
<div class="dc" style="left:2px;top:575px;width:80px;height:25px;background:#0a86fb"><span style="color:#fff">意甲</span></div>
<div class="dc dn" style="left:83px;top:575px;width:80px;height:25px;background:#f0f0f0">24-11-24</div>
<div class="dc" style="left:164px;top:575px;width:92px;height:25px;background:#f0f0f0"><span style="color:#1f801f">热那亚</span></div>
<div class="dc dn" style="left:257px;top:575px;width:96px;height:25px;background:#f0f0f0"><span style="color:#e02a2a">2-2</span>(1-1)</div>
<div class="dc dn" style="left:354px;top:575px;width:39px;height:25px;background:#f0f0f0">6-8</div>
<div class="dc" style="left:394px;top:575px;width:79px;height:25px;background:#f0f0f0"><span style="color:#222">卡利亚里</span></div>
<div class="dc dn" style="left:474px;top:575px;width:51px;height:25px;background:#fffaf6">1.11</div>
<div class="dc" style="left:526px;top:575px;width:89px;height:25px;background:#fffaf6">平/半</div>
<div class="dc dn" style="left:616px;top:575px;width:54px;height:25px;background:#fffaf6">0.79</div>
<div class="dc dn" style="left:671px;top:575px;width:70px;height:25px;background:#f0f8fd">2.45</div>
<div class="dc dn" style="left:742px;top:575px;width:70px;height:25px;background:#f0f8fd">3.19</div>
<div class="dc dn" style="left:813px;top:575px;width:71px;height:25px;background:#f0f8fd">3.00</div>
<div class="dc" style="left:885px;top:575px;width:40px;height:25px;background:#f0f0f0"><span style="color:#1f801f">平</span></div>
<div class="dc" style="left:926px;top:575px;width:40px;height:25px;background:#f0f0f0"><span style="color:#1a1ab4">输</span></div>
<div class="dc" style="left:967px;top:575px;width:61px;height:25px;background:#f0f0f0"><span style="color:#e02a2a">大</span></div>
<div style="left:82px;top:600px;width:947px;height:1px;background:#c4c4c4"></div>
<div style="left:1px;top:600px;width:81px;height:1px;background:#70c0ff"></div>
<div style="left:1px;top:574px;width:1px;height:27px;background:#c4c4c4"></div>
<div style="left:82px;top:574px;width:1px;height:27px;background:#c4c4c4"></div>
<div style="left:163px;top:574px;width:1px;height:27px;background:#c4c4c4"></div>
<div style="left:256px;top:574px;width:1px;height:27px;background:#c4c4c4"></div>
<div style="left:353px;top:574px;width:1px;height:27px;background:#c4c4c4"></div>
<div style="left:393px;top:574px;width:1px;height:27px;background:#c4c4c4"></div>
<div style="left:473px;top:574px;width:1px;height:27px;background:#c4c4c4"></div>
<div style="left:525px;top:574px;width:1px;height:27px;background:#c4c4c4"></div>
<div style="left:615px;top:574px;width:1px;height:27px;background:#c4c4c4"></div>
<div style="left:670px;top:574px;width:1px;height:27px;background:#c4c4c4"></div>
<div style="left:741px;top:574px;width:1px;height:27px;background:#c4c4c4"></div>
<div style="left:812px;top:574px;width:1px;height:27px;background:#c4c4c4"></div>
<div style="left:884px;top:574px;width:1px;height:27px;background:#c4c4c4"></div>
<div style="left:925px;top:574px;width:1px;height:27px;background:#c4c4c4"></div>
<div style="left:966px;top:574px;width:1px;height:27px;background:#c4c4c4"></div>
<div style="left:1028px;top:574px;width:1px;height:27px;background:#c4c4c4"></div>
<div class="dc" style="left:2px;top:601px;width:80px;height:25px;background:#0a86fb"><span style="color:#fff">意甲</span></div>
<div class="dc dn" style="left:83px;top:601px;width:80px;height:25px;background:#fff">24-11-08</div>
<div class="dc" style="left:164px;top:601px;width:92px;height:25px;background:#fff"><span style="color:#1f801f">热那亚</span></div>
<div class="dc dn" style="left:257px;top:601px;width:96px;height:25px;background:#fff"><span style="color:#e02a2a">1-1</span>(0-1)</div>
<div class="dc dn" style="left:354px;top:601px;width:39px;height:25px;background:#fff">8-5</div>
<div class="dc" style="left:394px;top:601px;width:79px;height:25px;background:#fff"><span style="color:#222">科莫</span></div>
<div class="dc dn" style="left:474px;top:601px;width:51px;height:25px;background:#fffaf6">0.83</div>
<div class="dc" style="left:526px;top:601px;width:89px;height:25px;background:#fffaf6">受平/半</div>
<div class="dc dn" style="left:616px;top:601px;width:54px;height:25px;background:#fffaf6">1.06</div>
<div class="dc dn" style="left:671px;top:601px;width:70px;height:25px;background:#f0f8fd">3.13</div>
<div class="dc dn" style="left:742px;top:601px;width:70px;height:25px;background:#f0f8fd">3.01</div>
<div class="dc dn" style="left:813px;top:601px;width:71px;height:25px;background:#f0f8fd">2.48</div>
<div class="dc" style="left:885px;top:601px;width:40px;height:25px;background:#fff"><span style="color:#1f801f">平</span></div>
<div class="dc" style="left:926px;top:601px;width:40px;height:25px;background:#fff"><span style="color:#e02a2a">赢</span></div>
<div class="dc" style="left:967px;top:601px;width:61px;height:25px;background:#fff"><span style="color:#1a1ab4">小</span></div>
<div style="left:82px;top:626px;width:947px;height:1px;background:#c4c4c4"></div>
<div style="left:1px;top:626px;width:81px;height:1px;background:#70c0ff"></div>
<div style="left:1px;top:600px;width:1px;height:27px;background:#c4c4c4"></div>
<div style="left:82px;top:600px;width:1px;height:27px;background:#c4c4c4"></div>
<div style="left:163px;top:600px;width:1px;height:27px;background:#c4c4c4"></div>
<div style="left:256px;top:600px;width:1px;height:27px;background:#c4c4c4"></div>
<div style="left:353px;top:600px;width:1px;height:27px;background:#c4c4c4"></div>
<div style="left:393px;top:600px;width:1px;height:27px;background:#c4c4c4"></div>
<div style="left:473px;top:600px;width:1px;height:27px;background:#c4c4c4"></div>
<div style="left:525px;top:600px;width:1px;height:27px;background:#c4c4c4"></div>
<div style="left:615px;top:600px;width:1px;height:27px;background:#c4c4c4"></div>
<div style="left:670px;top:600px;width:1px;height:27px;background:#c4c4c4"></div>
<div style="left:741px;top:600px;width:1px;height:27px;background:#c4c4c4"></div>
<div style="left:812px;top:600px;width:1px;height:27px;background:#c4c4c4"></div>
<div style="left:884px;top:600px;width:1px;height:27px;background:#c4c4c4"></div>
<div style="left:925px;top:600px;width:1px;height:27px;background:#c4c4c4"></div>
<div style="left:966px;top:600px;width:1px;height:27px;background:#c4c4c4"></div>
<div style="left:1028px;top:600px;width:1px;height:27px;background:#c4c4c4"></div>
<div class="dc" style="left:2px;top:627px;width:80px;height:25px;background:#0a86fb"><span style="color:#fff">意甲</span></div>
<div class="dc dn" style="left:83px;top:627px;width:80px;height:25px;background:#f0f0f0">24-11-05</div>
<div class="dc" style="left:164px;top:627px;width:92px;height:25px;background:#f0f0f0"><span style="color:#222">帕尔马</span></div>
<div class="dc dn" style="left:257px;top:627px;width:96px;height:25px;background:#f0f0f0"><span style="color:#e02a2a">0-1</span>(0-0)</div>
<div class="dc dn" style="left:354px;top:627px;width:39px;height:25px;background:#f0f0f0">3-7</div>
<div class="dc" style="left:394px;top:627px;width:79px;height:25px;background:#f0f0f0"><span style="color:#1f801f">热那亚</span></div>
<div class="dc dn" style="left:474px;top:627px;width:51px;height:25px;background:#fffaf6">1.07</div>
<div class="dc" style="left:526px;top:627px;width:89px;height:25px;background:#fffaf6">半/一</div>
<div class="dc dn" style="left:616px;top:627px;width:54px;height:25px;background:#fffaf6">0.82</div>
<div class="dc dn" style="left:671px;top:627px;width:70px;height:25px;background:#f0f8fd">1.76</div>
<div class="dc dn" style="left:742px;top:627px;width:70px;height:25px;background:#f0f8fd">3.75</div>
<div class="dc dn" style="left:813px;top:627px;width:71px;height:25px;background:#f0f8fd">4.52</div>
<div class="dc" style="left:885px;top:627px;width:40px;height:25px;background:#f0f0f0"><span style="color:#e02a2a">胜</span></div>
<div class="dc" style="left:926px;top:627px;width:40px;height:25px;background:#f0f0f0"><span style="color:#e02a2a">赢</span></div>
<div class="dc" style="left:967px;top:627px;width:61px;height:25px;background:#f0f0f0"><span style="color:#1a1ab4">小</span></div>
<div style="left:82px;top:652px;width:947px;height:1px;background:#c4c4c4"></div>
<div style="left:1px;top:652px;width:81px;height:1px;background:#70c0ff"></div>
<div style="left:1px;top:626px;width:1px;height:27px;background:#c4c4c4"></div>
<div style="left:82px;top:626px;width:1px;height:27px;background:#c4c4c4"></div>
<div style="left:163px;top:626px;width:1px;height:27px;background:#c4c4c4"></div>
<div style="left:256px;top:626px;width:1px;height:27px;background:#c4c4c4"></div>
<div style="left:353px;top:626px;width:1px;height:27px;background:#c4c4c4"></div>
<div style="left:393px;top:626px;width:1px;height:27px;background:#c4c4c4"></div>
<div style="left:473px;top:626px;width:1px;height:27px;background:#c4c4c4"></div>
<div style="left:525px;top:626px;width:1px;height:27px;background:#c4c4c4"></div>
<div style="left:615px;top:626px;width:1px;height:27px;background:#c4c4c4"></div>
<div style="left:670px;top:626px;width:1px;height:27px;background:#c4c4c4"></div>
<div style="left:741px;top:626px;width:1px;height:27px;background:#c4c4c4"></div>
<div style="left:812px;top:626px;width:1px;height:27px;background:#c4c4c4"></div>
<div style="left:884px;top:626px;width:1px;height:27px;background:#c4c4c4"></div>
<div style="left:925px;top:626px;width:1px;height:27px;background:#c4c4c4"></div>
<div style="left:966px;top:626px;width:1px;height:27px;background:#c4c4c4"></div>
<div style="left:1028px;top:626px;width:1px;height:27px;background:#c4c4c4"></div>
<div class="dc" style="left:2px;top:653px;width:80px;height:25px;background:#0a86fb"><span style="color:#fff">意甲</span></div>
<div class="dc dn" style="left:83px;top:653px;width:80px;height:25px;background:#fff">24-11-01</div>
<div class="dc" style="left:164px;top:653px;width:92px;height:25px;background:#fff"><span style="color:#1f801f">热那亚</span></div>
<div class="dc dn" style="left:257px;top:653px;width:96px;height:25px;background:#fff"><span style="color:#e02a2a">0-1</span>(0-0)</div>
<div class="dc dn" style="left:354px;top:653px;width:39px;height:25px;background:#fff">4-4</div>
<div class="dc" style="left:394px;top:653px;width:79px;height:25px;background:#fff"><span style="color:#222">佛罗伦萨</span></div>
<div class="dc dn" style="left:474px;top:653px;width:51px;height:25px;background:#fffaf6">0.95</div>
<div class="dc" style="left:526px;top:653px;width:89px;height:25px;background:#fffaf6">受半/一</div>
<div class="dc dn" style="left:616px;top:653px;width:54px;height:25px;background:#fffaf6">0.94</div>
<div class="dc dn" style="left:671px;top:653px;width:70px;height:25px;background:#f0f8fd">5.07</div>
<div class="dc dn" style="left:742px;top:653px;width:70px;height:25px;background:#f0f8fd">3.80</div>
<div class="dc dn" style="left:813px;top:653px;width:71px;height:25px;background:#f0f8fd">1.69</div>
<div class="dc" style="left:885px;top:653px;width:40px;height:25px;background:#fff"><span style="color:#1a1ab4">负</span></div>
<div class="dc" style="left:926px;top:653px;width:40px;height:25px;background:#fff"><span style="color:#1a1ab4">输</span></div>
<div class="dc" style="left:967px;top:653px;width:61px;height:25px;background:#fff"><span style="color:#1a1ab4">小</span></div>
<div style="left:82px;top:678px;width:947px;height:1px;background:#c4c4c4"></div>
<div style="left:1px;top:678px;width:81px;height:1px;background:#70c0ff"></div>
<div style="left:1px;top:652px;width:1px;height:27px;background:#c4c4c4"></div>
<div style="left:82px;top:652px;width:1px;height:27px;background:#c4c4c4"></div>
<div style="left:163px;top:652px;width:1px;height:27px;background:#c4c4c4"></div>
<div style="left:256px;top:652px;width:1px;height:27px;background:#c4c4c4"></div>
<div style="left:353px;top:652px;width:1px;height:27px;background:#c4c4c4"></div>
<div style="left:393px;top:652px;width:1px;height:27px;background:#c4c4c4"></div>
<div style="left:473px;top:652px;width:1px;height:27px;background:#c4c4c4"></div>
<div style="left:525px;top:652px;width:1px;height:27px;background:#c4c4c4"></div>
<div style="left:615px;top:652px;width:1px;height:27px;background:#c4c4c4"></div>
<div style="left:670px;top:652px;width:1px;height:27px;background:#c4c4c4"></div>
<div style="left:741px;top:652px;width:1px;height:27px;background:#c4c4c4"></div>
<div style="left:812px;top:652px;width:1px;height:27px;background:#c4c4c4"></div>
<div style="left:884px;top:652px;width:1px;height:27px;background:#c4c4c4"></div>
<div style="left:925px;top:652px;width:1px;height:27px;background:#c4c4c4"></div>
<div style="left:966px;top:652px;width:1px;height:27px;background:#c4c4c4"></div>
<div style="left:1028px;top:652px;width:1px;height:27px;background:#c4c4c4"></div>
<div class="dc" style="left:2px;top:679px;width:80px;height:25px;background:#0a86fb"><span style="color:#fff">意甲</span></div>
<div class="dc dn" style="left:83px;top:679px;width:80px;height:25px;background:#f0f0f0">24-10-27</div>
<div class="dc" style="left:164px;top:679px;width:92px;height:25px;background:#f0f0f0"><span style="color:#222">拉齐奥</span></div>
<div class="dc dn" style="left:257px;top:679px;width:96px;height:25px;background:#f0f0f0"><span style="color:#e02a2a">3-0</span>(1-0)</div>
<div class="dc dn" style="left:354px;top:679px;width:39px;height:25px;background:#f0f0f0">7-4</div>
<div class="dc" style="left:394px;top:679px;width:79px;height:25px;background:#f0f0f0"><span style="color:#1f801f">热那亚</span></div>
<div class="dc dn" style="left:474px;top:679px;width:51px;height:25px;background:#fffaf6">0.97</div>
<div class="dc" style="left:526px;top:679px;width:89px;height:25px;background:#fffaf6">一/球半</div>
<div class="dc dn" style="left:616px;top:679px;width:54px;height:25px;background:#fffaf6">0.92</div>
<div class="dc dn" style="left:671px;top:679px;width:70px;height:25px;background:#f0f8fd">1.43</div>
<div class="dc dn" style="left:742px;top:679px;width:70px;height:25px;background:#f0f8fd">4.54</div>
<div class="dc dn" style="left:813px;top:679px;width:71px;height:25px;background:#f0f8fd">7.35</div>
<div class="dc" style="left:885px;top:679px;width:40px;height:25px;background:#f0f0f0"><span style="color:#1a1ab4">负</span></div>
<div class="dc" style="left:926px;top:679px;width:40px;height:25px;background:#f0f0f0"><span style="color:#1a1ab4">输</span></div>
<div class="dc" style="left:967px;top:679px;width:61px;height:25px;background:#f0f0f0"><span style="color:#e02a2a">大</span></div>
<div style="left:82px;top:704px;width:947px;height:1px;background:#c4c4c4"></div>
<div style="left:1px;top:704px;width:81px;height:1px;background:#70c0ff"></div>
<div style="left:1px;top:678px;width:1px;height:27px;background:#c4c4c4"></div>
<div style="left:82px;top:678px;width:1px;height:27px;background:#c4c4c4"></div>
<div style="left:163px;top:678px;width:1px;height:27px;background:#c4c4c4"></div>
<div style="left:256px;top:678px;width:1px;height:27px;background:#c4c4c4"></div>
<div style="left:353px;top:678px;width:1px;height:27px;background:#c4c4c4"></div>
<div style="left:393px;top:678px;width:1px;height:27px;background:#c4c4c4"></div>
<div style="left:473px;top:678px;width:1px;height:27px;background:#c4c4c4"></div>
<div style="left:525px;top:678px;width:1px;height:27px;background:#c4c4c4"></div>
<div style="left:615px;top:678px;width:1px;height:27px;background:#c4c4c4"></div>
<div style="left:670px;top:678px;width:1px;height:27px;background:#c4c4c4"></div>
<div style="left:741px;top:678px;width:1px;height:27px;background:#c4c4c4"></div>
<div style="left:812px;top:678px;width:1px;height:27px;background:#c4c4c4"></div>
<div style="left:884px;top:678px;width:1px;height:27px;background:#c4c4c4"></div>
<div style="left:925px;top:678px;width:1px;height:27px;background:#c4c4c4"></div>
<div style="left:966px;top:678px;width:1px;height:27px;background:#c4c4c4"></div>
<div style="left:1028px;top:678px;width:1px;height:27px;background:#c4c4c4"></div>
<div class="ft" style="left:2px;top:705px;width:1026px;height:25px;background:#fff">近<span class="r">10</span>场,胜3平4负3, 胜率:<span class="r">30%</span> 让胜率:<span class="r">50%</span> 大率:<span class="r">40%</span> 单率:<span class="r">50%</span></div>
<div style="left:1px;top:704px;width:1px;height:27px;background:#c4c4c4"></div>
<div style="left:1028px;top:704px;width:1px;height:27px;background:#c4c4c4"></div>
<div style="left:1px;top:730px;width:1028px;height:1px;background:#c4c4c4"></div>
</body></html>
